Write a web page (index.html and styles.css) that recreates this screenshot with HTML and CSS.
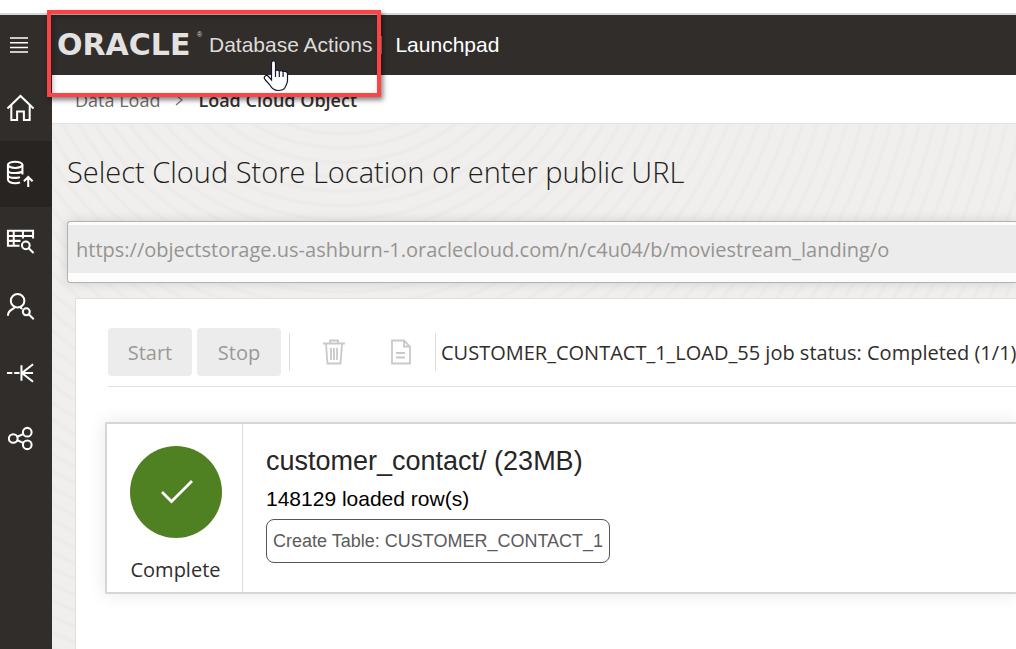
FILE: index.html
```html
<!DOCTYPE html>
<html lang="en">
<head>
<meta charset="utf-8">
<title>Database Actions | Launchpad</title>
<link rel="stylesheet" href="styles.css">
</head>
<body>
<div class="app">
  <header class="topbar">
    <button class="menu-button" aria-label="Menu">
      <svg width="20" height="18" viewBox="0 0 20 18" fill="none" stroke="#fff" stroke-width="1.5"><path d="M1 2h18M1 6.700h18M1 11.400h18M1 16h18"/></svg>
    </button>
    <a class="brand" href="#"><span class="wordmark">ORACLE</span><sup class="mark">®</sup><span class="product">Database Actions</span></a>
    <span class="separator"></span>
    <a class="launchpad" href="#">Launchpad</a>
  </header>
  <div class="body">
    <nav class="sidebar" aria-label="Tools">
      <a class="nav-item" href="#" aria-label="Home"><svg class="nav-icon" viewBox="0 0 30 30"><path d="M1.500 15 15 2l13.500 13M5.500 11.500V27h6v-9h7v9h6V11.500"/></svg></a>
      <a class="nav-item active" href="#" aria-label="Data Load"><svg class="nav-icon" viewBox="0 0 30 30"><ellipse cx="9.500" cy="5" rx="7.500" ry="3.200"/><path d="M2 5v15.500c0 2 3.500 3.500 7.500 3.500 2 0 3.500-.2 5-.8M17 5v10M2 10.500c0 2 3.500 3 7.500 3s7.500-1 7.500-3M2 15.500c0 2 3.500 3 7.500 3 2 0 3.500-.2 5-.8M23 28V17.500M18.500 22l4.500-4.500 4.500 4.500"/></svg></a>
      <a class="nav-item" href="#" aria-label="Catalog"><svg class="nav-icon" viewBox="0 0 30 30"><path d="M14 20.500H2V5h26v8M2 10.300h26M2 15.400h13M8 5v15.500M17.500 5v8"/><circle cx="20.500" cy="20" r="4"/><path d="m23.500 23 5 5"/></svg></a>
      <a class="nav-item" href="#" aria-label="Data Insights"><svg class="nav-icon" viewBox="0 0 30 30"><circle cx="12" cy="9" r="7"/><path d="M9 15.500c0 2.500-7 2-7 9M15 15.500c0 1.200 1 1.600 2 2"/><circle cx="21" cy="20.500" r="3.600"/><path d="m23.700 23.200 5 5"/></svg></a>
      <a class="nav-item" href="#" aria-label="Business Models"><svg class="nav-icon" viewBox="0 0 30 30"><path d="M1 15.500h5.500M8.500 15.500h5.500M16 15.500h12M16 7.500v16M28 6.500 16.500 15.500 28 24.500"/></svg></a>
      <a class="nav-item" href="#" aria-label="Data Sharing"><svg class="nav-icon" viewBox="0 0 30 30"><circle cx="7.500" cy="15" r="4.500"/><circle cx="22" cy="8.500" r="4.500"/><circle cx="22" cy="21.500" r="4.500"/><path d="m11.700 13.200 6-2.800M11.700 16.800l6 2.800"/></svg></a>
    </nav>
    <main class="content">
      <nav class="breadcrumb" aria-label="Breadcrumb">
        <a href="#">Data Load</a>
        <svg width="8" height="12" viewBox="0 0 8 12" fill="none" stroke="#777" stroke-width="1.200"><path d="m1 1 6 5-6 5"/></svg>
        <strong>Load Cloud Object</strong>
      </nav>
      <section class="workspace">
        <h1 class="heading"><label for="location">Select Cloud Store Location or enter public URL</label></h1>
        <div class="url-field"><input id="location" type="text" disabled value="https://objectstorage.us-ashburn-1.oraclecloud.com/n/c4u04/b/moviestream_landing/o"></div>
        <div class="panel">
          <div class="toolbar">
            <button class="action" disabled>Start</button>
            <button class="action" disabled>Stop</button>
            <span class="rule"></span>
            <span class="tools">
              <button class="icon-button" disabled aria-label="Delete"><svg width="22" height="26" viewBox="0 0 22 26"><path d="M0 4.500h22M7 4V1.500h8V4M3 5l1.500 19.500h13L19 5M8 9v12M11 9v12M14 9v12"/></svg></button>
              <button class="icon-button" disabled aria-label="Report"><svg width="22" height="26" viewBox="0 0 22 26"><path d="M2 1.500h12l6 6v17H2zM14 1.500v6h6M6 14h9M6 18.500h9"/></svg></button>
            </span>
            <span class="rule"></span>
            <span class="status">CUSTOMER_CONTACT_1_LOAD_55 job status: Completed (1/1)</span>
          </div>
          <article class="job">
            <div class="job-state">
              <svg width="92" height="92" viewBox="0 0 92 92"><circle cx="46" cy="46" r="46" fill="#4f8022"/><path d="m32 46 9.500 9.500L62 35" fill="none" stroke="#fff" stroke-width="2.800"/></svg>
              <span>Complete</span>
            </div>
            <div class="job-info">
              <h2>customer_contact/ (23MB)</h2>
              <p>148129 loaded row(s)</p>
              <span class="chip">Create Table: CUSTOMER_CONTACT_1</span>
            </div>
          </article>
        </div>
      </section>
    </main>
  </div>
  <div class="highlight"></div>
  <svg class="pointer" width="26" height="32" viewBox="0 0 26 32"><path d="M8.500 20V3c0-3 4-3 4 0v8.500c0-2 3.500-2 3.800.3 0-1.600 3.500-1.600 3.800.6 0-1.500 4-1.500 4.400 1.200V21c0 2-1.500 4-2.500 6.500-1 2-3.500 3-7 3-4 0-6.500-2.500-8.500-6l-4.500-5c-2-2.500 1-5.500 3.500-3z" fill="#fff" stroke="#14142b" stroke-width="1.200"/><path d="M12.500 11v6M16.300 12v5M20.100 12.500V17" stroke="#14142b" stroke-width="1.200"/></svg>
</div>
</body>
</html>
```
FILE: styles.css
```css
* { box-sizing: border-box; }
body { margin: 0; background: #fff; color: #312d2a; font-family: "Open Sans", "Noto Sans", sans-serif; overflow: hidden; }
a { color: inherit; text-decoration: none; }
button { border: 0; padding: 0; font: inherit; }
h1, h2, p { margin: 0; font-weight: 400; }

.app { position: relative; min-height: 100vh; padding-top: 13px; display: flex; flex-direction: column; }
.topbar { display: flex; align-items: center; height: 62px; border-top: 2px solid #d3d9d6; background: #312d2a; color: #fff; font: 21px "Liberation Sans", Arial, sans-serif; white-space: nowrap; }
.menu-button { width: 38px; padding-left: 9px; margin-right: 17px; background: none; display: flex; }
.brand { display: flex; align-items: center; color: #dcdbda; }
.wordmark { width: 142px; font: 700 30px/32px "DejaVu Sans", sans-serif; color: #e4e2e0; padding-left: 2px; }
.mark { align-self: flex-start; font-size: 7px; line-height: 12px; width: 12px; }
.separator { width: 2px; height: 18px; margin: 0 13px 0 8px; background: #b78e82; }

.body { flex: 1; display: flex; }
.sidebar { flex: none; width: 52px; background: #312d2a; }
.nav-item { display: flex; align-items: center; height: 66px; padding-left: 6px; }
.nav-item.active { background: #282421; }
.nav-icon { width: 29px; height: 29px; fill: none; stroke: #fff; stroke-width: 2.100; }

.content { flex: 1; min-width: 0; display: flex; flex-direction: column; }
.breadcrumb { display: flex; align-items: center; gap: 15px; height: 49px; padding: 2px 0 0 23px; border-bottom: 1px solid #e2e2e2; font-size: 18px; color: #6f6c69; white-space: nowrap; }
.breadcrumb strong { font-weight: 600; color: #33302d; }

.workspace {
  flex: 1; padding: 25px 0 0 15px; overflow: hidden; background-color: #f0efed;
  background-image: repeating-radial-gradient(ellipse at 30% -30%, transparent 0 8px, rgba(120,110,100,.035) 11px, transparent 14px);
}
.heading { font-size: 29px; line-height: 46px; font-weight: 300; color: #211e1c; white-space: nowrap; }
.url-field { margin-top: 26px; padding: 3px 0 9px; border: 1px solid #b4b2b0; border-right: 0; border-radius: 3px 0 0 3px; background: #fcfcfc; box-shadow: 0 0 12px rgba(0,0,0,.12); }
.url-field input { display: block; width: 100%; height: 48px; padding: 0 8px; border: 0; background: #ececec; color: #969492; font: 20px "Open Sans", sans-serif; }

.panel { margin: 15px 0 0 8px; min-height: 360px; padding: 29px 0 0 29px; background: #fff; border: 1px solid #e0dfde; border-right: 0; }
.toolbar { display: flex; align-items: center; gap: 5px; height: 59px; margin-left: 3px; padding-bottom: 10px; border-bottom: 1px solid #e0e0e0; white-space: nowrap; }
.action { flex: none; width: 84px; height: 48px; border-radius: 4px; background: #ececec; color: #9b9998; font-size: 20px; }
.rule { flex: none; width: 1px; height: 38px; margin-left: 3px; background: #dcdcdc; }
.tools { flex: none; width: 132px; padding-left: 28px; display: flex; gap: 45px; }
.icon-button { background: none; display: flex; }
.icon-button svg { fill: none; stroke: #c9c9ca; stroke-width: 1.800; }
.status { font-size: 20px; }

.job { display: flex; margin-top: 35px; height: 172px; border: 2px solid #d6d6d6; border-right: 0; border-radius: 2px 0 0 2px; background: #fff; box-shadow: 0 0 18px rgba(0,0,0,.1); }
.job-state { width: 136px; padding: 22px 0 0 2px; border-right: 1px solid #dcdcdc; display: flex; flex-direction: column; align-items: center; gap: 18px; font-size: 20px; line-height: 28px; }
.job-info { padding: 20px 0 0 23px; font-family: "Liberation Sans", Arial, sans-serif; color: #000; }
.job-info h2 { font-size: 27px; line-height: 34px; color: #262626; }
.job-info p { font-size: 21px; line-height: 24px; margin: 9px 0 8px; }
.chip { display: inline-block; padding: 0 6px; border: 1px solid #555; border-radius: 8px; font-size: 18px; line-height: 42px; color: #5b5b5b; }

/* Callout frame and mouse pointer lie over the page */
.highlight { position: absolute; left: 47px; top: 10px; width: 334px; height: 87px; border: 4px solid #ff4245; box-shadow: 2px 3px 5px rgba(0,0,0,.5), inset 2px 3px 5px rgba(0,0,0,.3); }
.pointer { position: absolute; left: 263px; top: 60px; }
```
